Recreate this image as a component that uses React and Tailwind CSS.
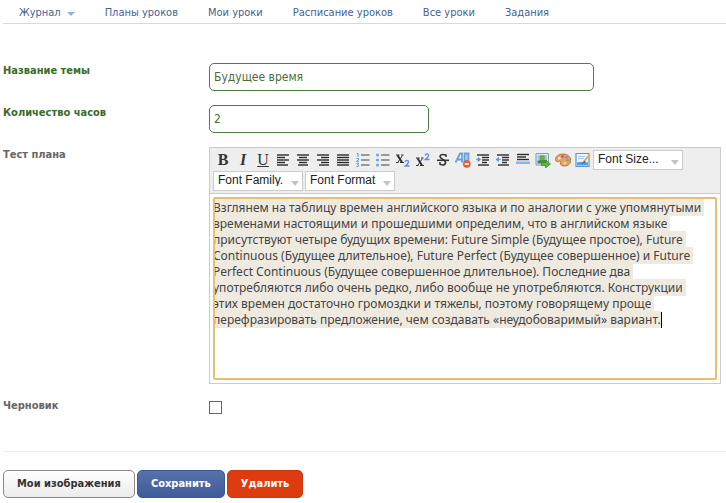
import { useEffect, useRef, useState } from 'react';

const NAV_ITEMS = ['Планы уроков', 'Мои уроки', 'Расписание уроков', 'Все уроки', 'Задания'];

const PLAN_TEXT = [
  'Взглянем на таблицу времен английского языка и по аналогии с уже упомянутыми',
  'временами настоящими и прошедшими определим, что в английском языке',
  'присутствуют четыре будущих времени: Future Simple (Будущее простое), Future',
  'Continuous (Будущее длительное), Future Perfect (Будущее совершенное) и Future',
  'Perfect Continuous (Будущее совершенное длительное). Последние два',
  'употребляются либо очень редко, либо вообще не употребляются. Конструкции',
  'этих времен достаточно громоздки и тяжелы, поэтому говорящему проще',
  'перефразировать предложение, чем создавать «неудобоваримый» вариант.',
].join('\n');

// Horizontal strokes shared by the alignment and indent icons: [x1, x2, y]
const Lines = ({ rows }) => (
  <g stroke="#2b2b2b" strokeWidth="1.4">
    {rows.map(([x1, x2, y]) => (
      <path key={y} d={`M${x1} ${y}H${x2}`} />
    ))}
  </g>
);

const Icon = ({ children }) => (
  <svg viewBox="0 0 16 16" className="h-4 w-4" aria-hidden="true">
    {children}
  </svg>
);

const Glyph = ({ children }) => (
  <span className="font-['Liberation_Serif',serif] text-base leading-4 text-[#333]">{children}</span>
);

const TOOLS = [
  { name: 'Bold', icon: <Glyph><b>B</b></Glyph> },
  { name: 'Italic', icon: <Glyph><b><i>I</i></b></Glyph> },
  { name: 'Underline', icon: <Glyph><u>U</u></Glyph> },
  { name: 'Left align', icon: <Icon><Lines rows={[[2, 14, 3], [2, 10, 5.5], [2, 14, 8], [2, 10, 10.5], [2, 13, 13]]} /></Icon> },
  { name: 'Center align', icon: <Icon><Lines rows={[[2, 14, 3], [4, 12, 5.5], [2, 14, 8], [4, 12, 10.5], [3, 13, 13]]} /></Icon> },
  { name: 'Right align', icon: <Icon><Lines rows={[[2, 14, 3], [6, 14, 5.5], [2, 14, 8], [6, 14, 10.5], [4, 14, 13]]} /></Icon> },
  { name: 'Justify', icon: <Icon><Lines rows={[[2, 14, 3], [2, 14, 5.5], [2, 14, 8], [2, 14, 10.5], [2, 14, 13]]} /></Icon> },
  {
    name: 'Ordered list',
    icon: (
      <Icon>
        <path d="M2 2l1-.7v3.5M1.5 6.5h2v1.4l-2 1.4h2.2M1.5 11.2h2l-1 1.3 1.2.7-.7 1.4H1.5" fill="none" stroke="#5b92dc" />
        <path d="M6 3h8.500M6 8h8.500M6 13h8.500" stroke="#444" />
      </Icon>
    ),
  },
  {
    name: 'Unordered list',
    icon: (
      <Icon>
        <g fill="#6fa3e4">
          <circle cx="2.500" cy="3" r="1.500" />
          <circle cx="2.500" cy="8" r="1.500" />
          <circle cx="2.500" cy="13" r="1.500" />
        </g>
        <path d="M6 3h8.500M6 8h8.500M6 13h8.500" stroke="#444" />
      </Icon>
    ),
  },
  {
    name: 'Subscript',
    icon: (
      <Icon>
        <path d="M1 3h3.500M6 3h2.500M1 10.500h2.500M5 10.500h4M3 10L7.500 3.500" stroke="#333" fill="none" />
        <path d="M2.500 3.200L7 10.300" stroke="#333" strokeWidth="2" />
        <path d="M10 9.800q1.500-2.200 3.400-.8q1 1.800-3.200 5h4.300" fill="none" stroke="#5b92dc" strokeWidth="1.300" />
      </Icon>
    ),
  },
  {
    name: 'Superscript',
    icon: (
      <Icon>
        <path d="M1 6h3.500M6 6h2.500M1 13.500h2.500M5 13.500h4M3 13L7.500 6.500" stroke="#333" fill="none" />
        <path d="M2.500 6.200L7 13.300" stroke="#333" strokeWidth="2" />
        <path d="M10 3.300q1.500-2.200 3.400-.8q1 1.800-3.200 5h4.300" fill="none" stroke="#5b92dc" strokeWidth="1.300" />
      </Icon>
    ),
  },
  {
    name: 'Strike through',
    icon: (
      <Icon>
        <path d="M11 5V3q-5-1.500-6 1q0 2 3 3.500t2.500 4q-1.500 2.500-5.500.8V10" fill="none" stroke="#333" strokeWidth="1.500" />
        <path d="M2 8.300h12" stroke="#333" strokeWidth="1.500" />
      </Icon>
    ),
  },
  {
    name: 'Remove formatting',
    icon: (
      <Icon>
        <path d="M.5 10.500L5 1.500h2v9M2 7.500h5" fill="none" stroke="#6b9fdc" strokeWidth="1.800" />
        <path d="M9.500 10V1.500h4V9" fill="#a5c8f0" stroke="#6b9fdc" strokeWidth="1.800" />
        <circle cx="11.800" cy="12" r="3.600" fill="#e5632b" stroke="#c8511d" strokeWidth=".5" />
        <path d="M9.700 12h4.200" stroke="#fff" strokeWidth="1.600" />
      </Icon>
    ),
  },
  {
    name: 'Indent',
    icon: (
      <Icon>
        <Lines rows={[[2, 14, 3], [7, 14, 5.5], [7, 14, 8], [7, 12, 10.5], [3, 14, 13]]} />
        <path d="M1 7.500h3M3 5.500l2.500 2L3 9.500z" fill="#5b92dc" stroke="#5b92dc" strokeWidth=".8" />
      </Icon>
    ),
  },
  {
    name: 'Remove indent',
    icon: (
      <Icon>
        <Lines rows={[[2, 14, 3], [7, 14, 5.5], [7, 14, 8], [7, 12, 10.5], [3, 14, 13]]} />
        <path d="M6 7.500H3M3.500 5.500L1 7.500l2.500 2z" fill="#5b92dc" stroke="#5b92dc" strokeWidth=".8" />
      </Icon>
    ),
  },
  {
    name: 'Horizontal rule',
    icon: (
      <Icon>
        <Lines rows={[[2, 14, 2.5], [2, 11, 5], [2, 14, 7.5]]} />
        <path d="M1 9.500h14v2.500H1z" fill="#8db4ea" />
      </Icon>
    ),
  },
  {
    name: 'Add image',
    icon: (
      <Icon>
        <path d="M1 1.500h12.500v11.500H1z" fill="#dcecf8" stroke="#7f9cb8" />
        <path d="M2.500 3h9.500v8.500H2.500z" fill="#9fc8ee" />
        <path d="M2.500 9q4-2 9.500-1v3.500H2.500z" fill="#4a8d35" />
        <circle cx="7.300" cy="5.700" r="2.700" fill="#6caa50" />
        <path d="M6.500 10.500h4V8l5 4-5 4v-2.500h-4z" fill="#62b345" stroke="#3b8429" strokeWidth=".7" />
      </Icon>
    ),
  },
  {
    name: 'Text color',
    icon: (
      <Icon>
        <path d="M8 2C3.500 2 .5 4.500.5 7.500c0 2.200 1.800 2.500 3 2 1.800-.8 2.500.3 2 1.500-.5 2 1 3 4 3 4 0 6.200-2.500 6.200-5.800C15.700 4.500 12.500 2 8 2z" fill="#e6a069" stroke="#b96d3c" strokeWidth=".9" />
        <circle cx="4.300" cy="6.300" r="1.300" fill="#f4e9df" />
        <circle cx="7.500" cy="4.500" r="1.300" fill="#d4503e" />
        <circle cx="11.200" cy="5.200" r="1.300" fill="#6799d6" />
        <circle cx="12.800" cy="8.300" r="1.300" fill="#75b064" />
        <circle cx="9.800" cy="11" r="1.500" fill="#f5d770" />
      </Icon>
    ),
  },
  {
    name: 'Edit HTML',
    icon: (
      <Icon>
        <path d="M1 1.500h13v13H1z" fill="#eaf4fd" stroke="#5b94d6" strokeWidth="1.200" />
        <path d="M3 4.500h7M3 6.500h6" stroke="#a7c9ec" />
        <path d="M2 10.500q4-1.500 11 0v3H2z" fill="#5a9de0" />
        <path d="M14.800 2.500L9 9.500" stroke="#e8b24c" strokeWidth="2.200" />
        <path d="M9.500 8.500L6.500 12.300l4-2z" fill="#6b5a45" />
      </Icon>
    ),
  },
];

const ToolbarSelect = ({ label }) => (
  <span className="grid h-5 w-[90px] grid-cols-1 items-center">
    <select
      aria-label={label}
      className="col-start-1 row-start-1 h-5 w-full appearance-none border border-[#ccc] bg-white pr-4 pb-1 pl-1 font-['Liberation_Sans',sans-serif] text-xs leading-4 text-[#222]"
    >
      <option>{label}</option>
    </select>
    <svg viewBox="0 0 8 5" className="pointer-events-none col-start-1 row-start-1 mt-1 mr-1 h-[5px] w-2 justify-self-end" aria-hidden="true">
      <path d="M0 0h8L4 5z" fill="#c4c4c4" />
    </svg>
  </span>
);

const Editor = () => {
  const [text, setText] = useState(PLAN_TEXT);
  const areaRef = useRef(null);

  // Start with the whole plan selected so it can be replaced at once
  useEffect(() => {
    areaRef.current.focus();
    areaRef.current.select();
  }, []);

  return (
    <div className="mr-[5px] border border-[#ccc]">
      <div className="flex flex-wrap items-center gap-y-px border-b border-[#ccc] bg-[#eee] px-[3px] py-0.5">
        {TOOLS.map((tool) => (
          <button key={tool.name} type="button" aria-label={tool.name} className="flex h-5 w-5 items-center justify-center">
            {tool.icon}
          </button>
        ))}
        <ToolbarSelect label="Font Size..." />
        <div className="flex basis-full gap-0.5">
          <ToolbarSelect label="Font Family." />
          <ToolbarSelect label="Font Format" />
        </div>
      </div>
      <div className="relative p-[3px]">
        <textarea
          id="plan"
          ref={areaRef}
          wrap="off"
          spellCheck={false}
          value={text}
          onChange={(e) => setText(e.target.value)}
          className="block h-[183px] w-full resize-none overflow-hidden rounded-xs bg-white py-[3px] font-['Noto_Sans',sans-serif] text-xs leading-4 text-[#444] outline-2 -outline-offset-2 outline-[#e8bf6f] selection:bg-[#eeeae0] selection:text-[#444]"
        />
        {/* Browsers hide the caret while a range is selected */}
        {text === PLAN_TEXT && (
          <span className="pointer-events-none absolute top-[118px] left-[451px] h-4 w-px bg-black" />
        )}
      </div>
    </div>
  );
};

const App = () => {
  const [title, setTitle] = useState('Будущее время');
  const [hours, setHours] = useState('2');

  return (
    <div className="bg-white pl-[3px] font-['DejaVu_Sans_Condensed','DejaVu_Sans',sans-serif] text-xs text-[#666]">
      <nav className="flex h-6 items-center gap-[30px] border-b border-[#d5d9e3] pt-1 pl-4 text-[11px] text-[#465f94]">
        <a href="#journal" className="flex items-center gap-1.5">
          Журнал
          <svg viewBox="0 0 8 4" className="h-1 w-2" aria-hidden="true">
            <path d="M0 0h8L4 4z" fill="#9eaed0" />
          </svg>
        </a>
        {NAV_ITEMS.map((item) => (
          <a key={item} href="#lessons">{item}</a>
        ))}
      </nav>

      <form onSubmit={(e) => e.preventDefault()}>
        <div className="grid grid-cols-[206px_1fr] gap-y-3.5 pt-[39px] text-[11px] leading-4 font-bold">
          <label htmlFor="title" className="text-[#3a6b2a]">Название темы</label>
          <input
            id="title"
            value={title}
            onChange={(e) => setTitle(e.target.value)}
            className="h-7 w-[385px] rounded-[5px] border border-[#4f7f3f] px-1 text-xs font-normal text-[#4a6f3a] outline-none"
          />
          <label htmlFor="hours" className="text-[#3a6b2a]">Количество часов</label>
          <input
            id="hours"
            value={hours}
            onChange={(e) => setHours(e.target.value)}
            className="h-7 w-[220px] rounded-[5px] border border-[#4f7f3f] px-1 text-xs font-normal text-[#4a6f3a] outline-none"
          />
          <label htmlFor="plan">Тест плана</label>
          <div className="min-w-0 font-normal">
            <Editor />
          </div>
          <label htmlFor="draft">Черновик</label>
          <input id="draft" type="checkbox" className="mt-[3px] h-[13px] w-[13px] appearance-none border border-[#666] bg-white checked:bg-[#3b5998]" />
        </div>

        <div className="mt-[37px] flex gap-0.5 border-t border-[#eee] pt-[18px] text-[11px] font-bold">
          <button type="button" className="h-7 rounded-[5px] border border-[#888] bg-linear-to-b from-white to-[#ececec] px-[13px] text-[#333]">
            Мои изображения
          </button>
          <button type="submit" className="h-7 rounded-[5px] border border-[#3b5998] bg-linear-to-b from-[#5872a9] to-[#3f5c9a] px-[13px] text-white">
            Сохранить
          </button>
          <button type="button" className="h-7 rounded-[5px] border border-[#c93a12] bg-[#dd3c10] px-[13px] text-white">
            Удалить
          </button>
        </div>
      </form>
    </div>
  );
};

export default App;
